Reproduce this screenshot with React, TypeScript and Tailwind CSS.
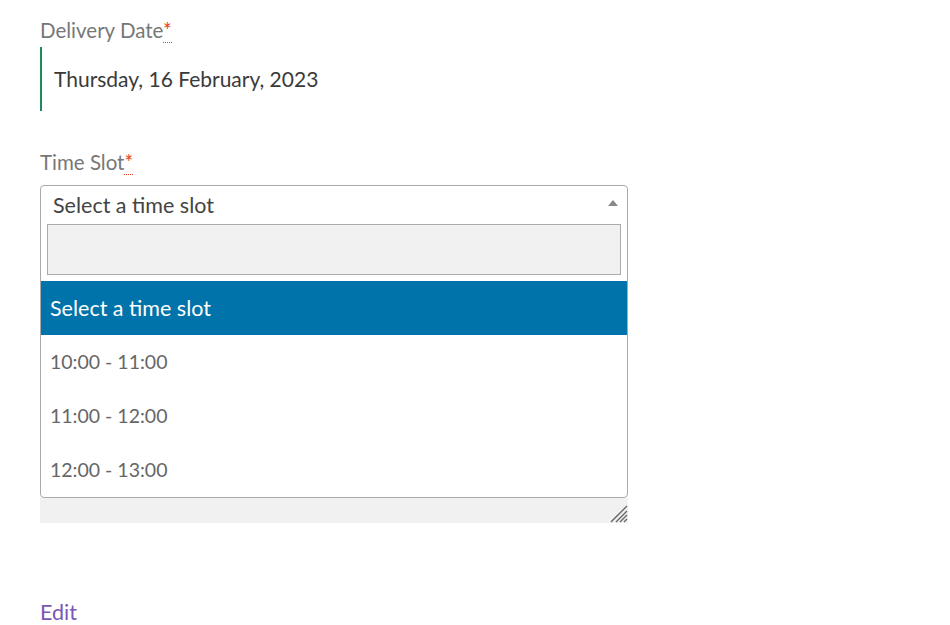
import React from "react";

function Req() {
  return (
    <abbr
      title="required"
      className="text-[#e2401c] no-underline border-b border-dotted border-[#e2401c] leading-none"
    >
      *
    </abbr>
  );
}

export default function App() {
  const options = ["10:00 - 11:00", "11:00 - 12:00", "12:00 - 13:00"];
  return (
    <div
      className="w-[950px] h-[625px] bg-white overflow-hidden pl-[40px]"
      style={{ fontFamily: "Lato, 'Open Sans', sans-serif" }}
    >
      <div className="w-[588px]">
        <div className="pt-[18px] h-[47px] text-[20.5px] leading-[24px] text-[#777]">
          Delivery Date<Req />
        </div>
        <div className="h-[64px] border-l-2 border-[#1e8a5c] pl-[12px] flex items-center text-[21px] text-[#3a3a3a]">
          Thursday, 16 February, 2023
        </div>
        <div className="pt-[39px] h-[74px] text-[20.5px] leading-[24px] text-[#777]">
          Time Slot<Req />
        </div>
        <div className="relative">
          <div className="border border-[#aaa] rounded-[4px] bg-white overflow-hidden">
            <div className="h-[38px] flex items-center justify-between pl-[12px] pr-[9px] text-[21.5px] text-[#444]">
              <span>Select a time slot</span>
              <svg width="10" height="6" viewBox="0 0 10 6" className="mt-[-4px]">
                <path d="M0 6 L5 0 L10 6 Z" fill="#888" />
              </svg>
            </div>
            <div className="px-[6px] pb-[6px]">
              <div className="h-[51px] border border-[#aaa] bg-[#f1f1f1]" />
            </div>
            <div className="h-[54px] bg-[#0073aa] text-white flex items-center pl-[9px] text-[21.5px]">
              Select a time slot
            </div>
            {options.map((o) => (
              <div
                key={o}
                className="h-[54px] flex items-center pl-[9px] text-[19.5px] text-[#666]"
              >
                {o}
              </div>
            ))}
          </div>
          <div className="h-[25px] bg-[#f1f1f1] flex justify-end items-end">
            <svg width="20" height="20" viewBox="0 0 20 20">
              <path d="M19 3 L3 19 M19 8 L8 19 M19 12 L12 19 M19 16 L16 19" stroke="#666" strokeWidth="1.4" />
            </svg>
          </div>
        </div>
        <div className="pt-[79px] text-[21.5px] leading-[20px] text-[#7b56b4]">
          Edit
        </div>
      </div>
    </div>
  );
}
